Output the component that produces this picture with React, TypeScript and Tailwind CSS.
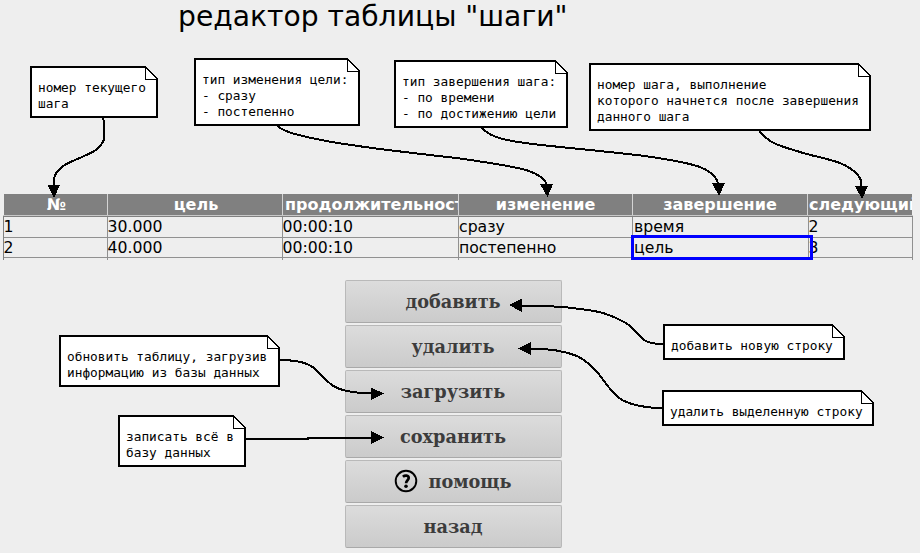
import React from 'react';

type Note = { x: number; y: number; w: number; h: number; lines: string[] };

const notes: Note[] = [
  { x: 30, y: 66, w: 128, h: 52, lines: ['номер текущего', 'шага'] },
  { x: 194, y: 58, w: 166, h: 68, lines: ['тип изменения цели:', '- сразу', '- постепенно'] },
  { x: 394, y: 60, w: 174, h: 68, lines: ['тип завершения шага:', '- по времени', '- по достижению цели'] },
  { x: 589, y: 63, w: 282, h: 68, lines: ['номер шага, выполнение', 'которого начнется после завершения', 'данного шага'] },
  { x: 59, y: 335, w: 221, h: 52, lines: ['обновить таблицу, загрузив', 'информацию из базы данных'] },
  { x: 118, y: 415, w: 128, h: 52, lines: ['записать всё в', 'базу данных'] },
  { x: 663, y: 324, w: 182, h: 36, lines: ['добавить новую строку'] },
  { x: 662, y: 390, w: 212, h: 36, lines: ['удалить выделенную строку'] },
];

function NoteBox({ x, y, w, h, lines }: Note) {
  return (
    <div className="absolute" style={{ left: x, top: y, width: w, height: h }}>
      <svg className="absolute inset-0" width={w} height={h} shapeRendering="crispEdges">
        <path d={`M1 1H${w - 12.5}L${w - 1} 12.5V${h - 1}H1Z`} fill="#fff" stroke="#000" strokeWidth="2" />
        <path d={`M${w - 12.5} 1V13.5H${w - 1}`} fill="none" stroke="#000" strokeWidth="1" />
      </svg>
      <div className="relative pt-[14px] pl-[8px] font-['DejaVu_Sans_Mono',monospace] text-[12.8px] leading-[16px] whitespace-pre text-black">
        {lines.map((l) => (
          <div key={l}>{l}</div>
        ))}
      </div>
    </div>
  );
}

const curves = [
  'M103 117C103 121 104 119 104 124V138C104 142 101 145 98 148C95 151 92 153 84 156C76 160 66 163 62 167C57 171 54 175 54 180V187',
  'M277 125C281 130 290 133 299 135C314 139 336 143 358 146C384 150 440 156 464 159C490 163 512 166 526 170C538 174 546 179 547 186',
  'M481 127C487 134 494 137 503 139C518 143 542 145 560 147C590 150 620 153 645 156C672 160 684 162 697 166C709 170 718 177 718 185',
  'M759 130C761 135 767 138 770 141C778 146 790 149 800 152C812 156 830 159 840 163C852 168 861 176 861 182V188',
  'M279 360C290 360 303 361 311 366C318 370 325 380 332 385C340 391 352 393 372 393.5',
  'M245 439H308V438H372',
  'M664 344C655 344 648 343 644 340C640 337 634 328 626 323C612 315 600 311 580 309C560 306 545 306 520 306',
  'M662 408C645 408 634 406 622 400C611 393 604 380 597 372C590 364 583 359 577 356C562 350 548 348.500 530 348.500',
];

const heads = [
  '47.500,185 60,185 54,198',
  '540,184 553,184 547.500,197',
  '712,183 725,183 719,196',
  '855,186 868,186 862,199',
  '371,387.500 371,400 384,393.500',
  '371,431 371,444 384,437.500',
  '522,298.500 522,312 509,305',
  '531,342 531,355 518,348.500',
];

const headers = ['№', 'цель', 'продолжительность', 'изменение', 'завершение', 'следующий'];
const rows = [
  ['1', '30.000', '00:00:10', 'сразу', 'время', '2'],
  ['2', '40.000', '00:00:10', 'постепенно', 'цель', '3'],
];
const buttons = ['добавить', 'удалить', 'загрузить', 'сохранить', 'помощь', 'назад'];

function HelpIcon() {
  return (
    <svg width="24" height="24" viewBox="0 0 24 24" fill="none" stroke="#000" className="mr-[10px] -mt-[2px]">
      <circle cx="12" cy="12" r="10.300" strokeWidth="1.9" />
      <path d="M8.900 7.700C11 6 14.700 6.200 14.700 8.900C14.700 11.200 12.100 11.300 12.100 14.300" strokeWidth="2.700" />
      <circle cx="12" cy="17.200" r="1.800" fill="#000" stroke="none" />
    </svg>
  );
}

export default function App() {
  return (
    <div className="relative h-[553px] w-[920px] overflow-hidden bg-[#eeeeee] text-black">
      <h1 className="h-[194px] pl-[178px] font-['DejaVu_Sans',sans-serif] text-[28.200px] leading-[34px] whitespace-nowrap">
        редактор таблицы "шаги"
      </h1>

      <div className="ml-[3px] w-[910px] font-['DejaVu_Sans',sans-serif] text-[15.700px]">
        <div className="mr-px ml-px grid h-[21px] grid-cols-[104px_175px_176px_174px_175px_104px] bg-[#808080] text-[16px] font-bold text-white">
          {headers.map((h, i) => (
            <div
              key={h}
              className={`flex overflow-hidden border-[#d4d4d4] leading-[21px] whitespace-nowrap ${i < 5 ? 'border-r' : ''} ${i === 2 ? 'pl-[2px]' : i === 5 ? 'pl-px' : 'justify-center'} ${i < 2 ? 'pl-[2px]' : ''}`}
            >
              {h}
            </div>
          ))}
        </div>
        <div className="h-px bg-[#c8c8c8]" />
        <div className="border-t border-l border-[#808080]">
          {rows.map((r) => (
            <div
              key={r[0]}
              className="grid h-[21px] grid-cols-[104px_175px_176px_174px_176px_104px] border-b border-[#909090] even:h-[20px]"
            >
              {r.map((c, i) => (
                <div key={i} className="border-r border-[#909090]">
                  <div
                    className={`leading-[20px] whitespace-nowrap ${i === 4 ? 'pl-px' : i === 3 ? '' : '-ml-[0.500px]'}`}
                  >
                    {c}
                  </div>
                </div>
              ))}
            </div>
          ))}
          <div className="grid h-[2px] grid-cols-[104px_175px_176px_174px_176px_104px]">
            {headers.map((h) => (
              <div key={h} className="border-r border-[#909090]" />
            ))}
          </div>
        </div>
      </div>
      <div className="absolute top-[235px] left-[631px] h-[25px] w-[182px] border-[3px] border-[#0000ff]" />

      <div className="mt-[20px] ml-[345px] flex w-[217px] flex-col gap-[2px]">
        {buttons.map((b) => (
          <div
            key={b}
            className="flex h-[43px] items-center justify-center rounded-[2px] border border-[#b9b9b9] border-b-[#a9a9a9] bg-linear-to-b from-[#dcdcdc] to-[#cbcbcb] pt-[1px] pr-[1px] font-['DejaVu_Serif',serif] text-[17.700px] leading-[20px] font-bold text-[#3c3c3c]"
          >
            {b === 'помощь' && <HelpIcon />}
            {b}
          </div>
        ))}
      </div>

      {notes.map((n) => (
        <NoteBox key={n.lines[0]} {...n} />
      ))}

      <svg className="absolute inset-0" width="920" height="553" shapeRendering="crispEdges">
        {curves.map((d) => (
          <path key={d} d={d} fill="none" stroke="#000" strokeWidth="2" />
        ))}
        {heads.map((p) => (
          <polygon key={p} points={p} fill="#000" />
        ))}
      </svg>
    </div>
  );
}
